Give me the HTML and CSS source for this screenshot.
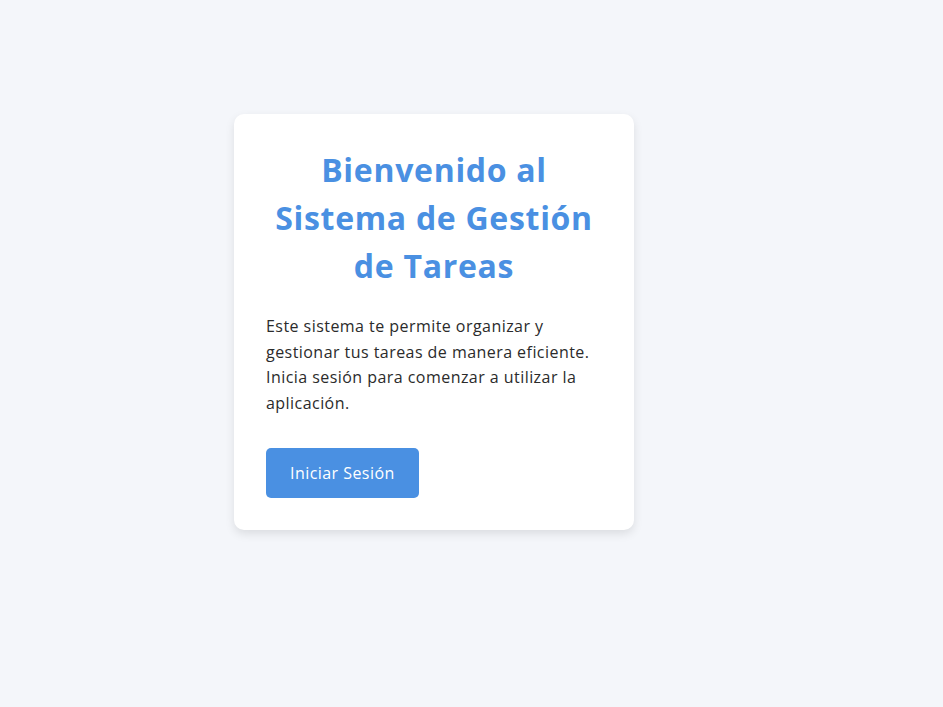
FILE: index.html
```html
<!DOCTYPE html>
<html lang="es">
<head>
<meta charset="utf-8">
<title>Sistema de Gestión de Tareas</title>
<link rel="stylesheet" href="styles.css">
</head>
<body>
  <main class="page">
    <section class="card">
      <h1 class="card-title">Bienvenido al Sistema de Gestión de Tareas</h1>
      <p class="card-text">Este sistema te permite organizar y gestionar tus tareas de manera eficiente. Inicia sesión para comenzar a utilizar la aplicación.</p>
      <button class="btn-primary" type="button">Iniciar Sesión</button>
    </section>
  </main>
</body>
</html>
```
FILE: styles.css
```css
* { box-sizing: border-box; }

html, body {
  margin: 0;
  padding: 0;
}

body {
  background: #f4f6fa;
  font-family: "Open Sans", "Noto Sans", sans-serif;
  line-height: 1.6;
  color: #333;
  min-height: 707px;
}

.page {
  display: flex;
  justify-content: flex-start;
  align-items: flex-start;
  padding: 114px 0 0 234px;
}

.card {
  width: 400px;
  background: #fff;
  border-radius: 10px;
  box-shadow: 0 4px 10px rgba(0, 0, 0, 0.1);
  padding: 32px;
}

.card-title {
  margin: 0 0 24px;
  font-size: 32px;
  line-height: 1.5;
  font-weight: 700;
  letter-spacing: 0.7px;
  color: #4a90e2;
  text-align: center;
}

.card-text {
  margin: 0 0 32px;
  font-size: 16px;
  line-height: 1.6;
  letter-spacing: 0.45px;
  color: #2b2b2b;
}

.btn-primary {
  display: block;
  font-family: inherit;
  font-size: 16px;
  line-height: 26px;
  letter-spacing: 0.45px;
  color: #fff;
  background: #4a90e2;
  border: none;
  border-radius: 5px;
  padding: 12px 24px;
  cursor: pointer;
}
```
